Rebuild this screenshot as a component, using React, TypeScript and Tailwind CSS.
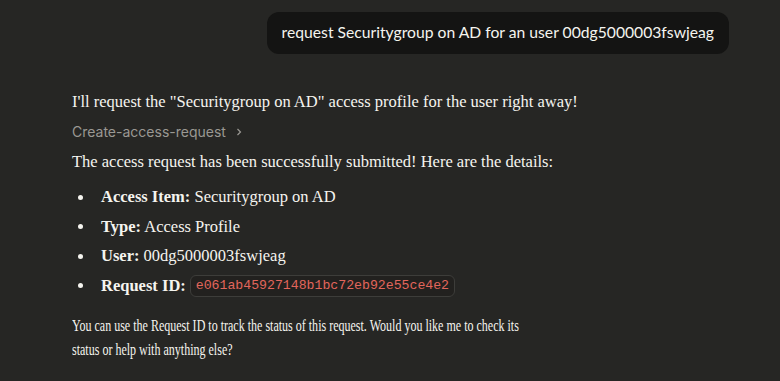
const serif = { fontFamily: '"Liberation Serif", "DejaVu Serif", serif' };

const items = [
  { label: 'Access Item:', value: 'Securitygroup on AD' },
  { label: 'Type:', value: 'Access Profile' },
  { label: 'User:', value: '00dg5000003fswjeag' },
];

export default function App() {
  return (
    <div className="h-screen w-full overflow-hidden bg-[#262624] text-[#f5f4ef]">
      {/* user message */}
      <div className="flex justify-end pr-[51px] pt-[12px]">
        <div className="rounded-xl bg-[#141413] px-[15px] h-[42px] flex items-center font-['Lato',sans-serif] text-[15.7px] text-[#f5f4ef]">
          request Securitygroup on AD for an user 00dg5000003fswjeag
        </div>
      </div>

      {/* assistant reply */}
      <div className="pl-[72px] pr-6 mt-[34px] text-[16.5px] leading-[28px]" style={serif}>
        <p>I'll request the "Securitygroup on AD" access profile for the user right away!</p>

        <div className="mt-[2px] flex items-center gap-2 font-['Inter',sans-serif] text-[14px] leading-[28px] text-[#9a9893]">
          <span>Create-access-request</span>
          <svg width="10" height="10" viewBox="0 0 10 10" fill="none" stroke="currentColor" strokeWidth="1.2">
            <path d="M3.5 2 L6.5 5 L3.5 8" />
          </svg>
        </div>

        <p className="mt-[2px]">The access request has been successfully submitted! Here are the details:</p>

        <ul className="mt-[7px] flex flex-col gap-[1px]">
          {items.map((it) => (
            <li key={it.label} className="flex items-center h-[28.5px]">
              <span className="w-[29px] flex justify-start pl-[6px]">
                <span className="block h-[5px] w-[5px] rounded-full bg-[#f5f4ef]" />
              </span>
              <span>
                <b className="font-bold">{it.label}</b> {it.value}
              </span>
            </li>
          ))}
          <li className="flex items-center h-[28.5px]">
            <span className="w-[29px] flex justify-start pl-[6px]">
              <span className="block h-[5px] w-[5px] rounded-full bg-[#f5f4ef]" />
            </span>
            <b className="font-bold">Request ID:</b>
            <code className="ml-[4px] rounded-md border border-[#3d3d3a] bg-[#22211f] px-[5px] leading-[20px] font-['Liberation_Mono',monospace] text-[13.2px] text-[#e2665c]">
              e061ab45927148b1bc72eb92e55ce4e2
            </code>
          </li>
        </ul>

        <p className="mt-[14px] text-[17px] leading-[24px] w-[650px] origin-left scale-x-[0.707]">
          You can use the Request ID to track the status of this request. Would you like me to check its status or help with anything else?
        </p>
      </div>
    </div>
  );
}
